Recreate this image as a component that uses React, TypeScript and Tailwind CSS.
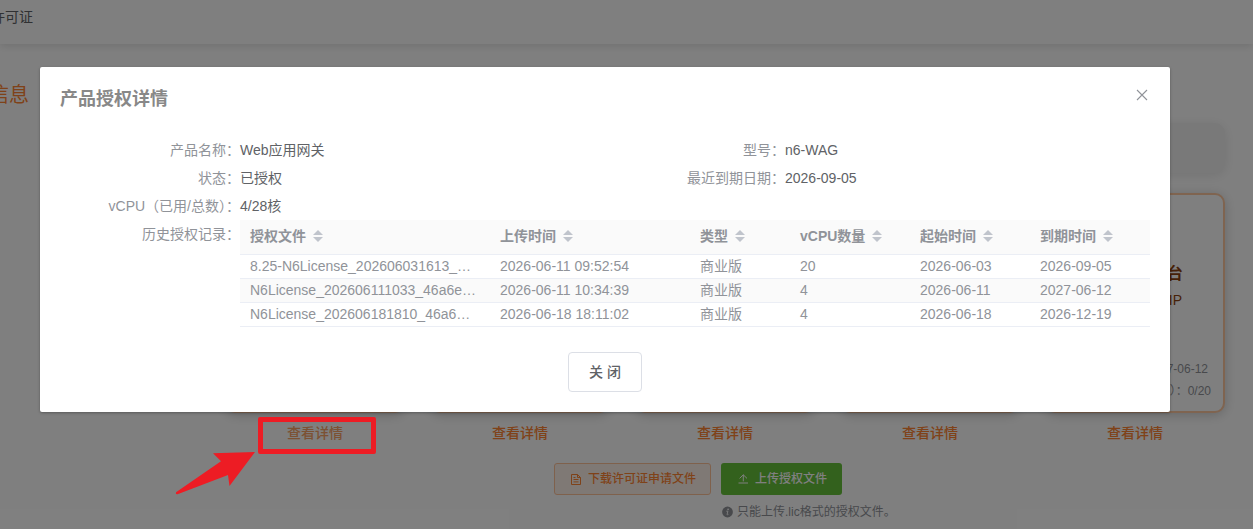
import React from "react";

const historyRows = [
  ["8.25-N6License_202606031613_…", "2026-06-11 09:52:54", "商业版", "20", "2026-06-03", "2026-09-05"],
  ["N6License_202606111033_46a6e…", "2026-06-11 10:34:39", "商业版", "4", "2026-06-11", "2027-06-12"],
  ["N6License_202606181810_46a6…", "2026-06-18 18:11:02", "商业版", "4", "2026-06-18", "2026-12-19"],
];

const columns = ["授权文件", "上传时间", "类型", "vCPU数量", "起始时间", "到期时间"];

function SortCaret() {
  return (
    <svg className="ml-[7px] h-3 w-[10px] shrink-0" viewBox="0 0 10 12" fill="#c0c4cc">
      <path d="M0 5L5 0L10 5Z" />
      <path d="M0 7L5 12L10 7Z" />
    </svg>
  );
}

function DocumentIcon() {
  return (
    <svg className="h-3 w-3" viewBox="0 0 12 12" fill="none" stroke="currentColor" strokeWidth="1">
      <path d="M1.5 1.5H7.5L10.5 4.5V11.5H1.5ZM7.5 1.5V4.5H10.5M3.5 4.5H5.5M3.5 6.5H8.5M3.5 8.9H8.5" />
    </svg>
  );
}

function UploadIcon() {
  return (
    <svg className="h-3 w-3" viewBox="0 0 12 12" fill="none" stroke="currentColor" strokeWidth="1">
      <path d="M1.5 10H11M6.3 8.4V1.8M2.6 5.4L6.3 1.8L10 5.4" />
    </svg>
  );
}

function InfoIcon() {
  return (
    <svg className="h-3 w-3" viewBox="0 0 12 12">
      <circle cx="6.5" cy="6" r="5.4" fill="currentColor" />
      <circle cx="7.1" cy="3.3" r="0.85" fill="#fff" />
      <path d="M5.3 5.2H6.9L6.1 8.4Q6 9.2 7.4 8.4" fill="none" stroke="#fff" strokeWidth="0.9" />
    </svg>
  );
}

function Field({ label, children }: { label: string; children: React.ReactNode }) {
  return (
    <div className="flex h-7 leading-7">
      <div className="w-[180px] shrink-0 text-right whitespace-nowrap text-[#909399]">{label}</div>
      <div className="text-[#606266]">{children}</div>
    </div>
  );
}

function LicensePage() {
  return (
    <div className="h-full bg-white">
      <header className="flex h-11 items-center bg-white pb-[10px] text-sm text-[#606266] shadow-[0_2px_8px_rgba(0,0,0,0.12)]">
        <span className="-ml-[9px] whitespace-nowrap">许可证</span>
      </header>
      <div className="flex h-[79px] items-start pt-[37px]">
        <h2 className="-ml-[11px] text-xl leading-7 whitespace-nowrap text-[#ff8533]">信息</h2>
      </div>
      <div className="mr-7 ml-[60px] h-[50px] rounded-[10px] bg-[#f2f2f2] shadow-[0_2px_12px_rgba(0,0,0,0.1)]" />
      <div className="mt-5 ml-[225px] flex gap-[25px]">
        {[0, 1, 2, 3, 4].map((i) => (
          <div key={i} className="flex w-[180px] flex-col items-center">
            <div className="flex h-[220px] w-full flex-col rounded-[10px] border-2 border-[#ffc8a0] bg-white shadow-[0_2px_12px_rgba(0,0,0,0.2)]">
              {i === 4 && (
                <>
                  <div className="mt-[67px] mr-[40px] text-right text-base leading-6 font-bold text-[#8f4310]">台</div>
                  <div className="mt-[2px] mr-[41px] text-right text-sm leading-6 text-[#8f4310]">IP</div>
                  <div className="mt-[46px] mr-[15px] text-right text-xs leading-[22px] text-[#909399]">7-06-12</div>
                  <div className="mr-[12px] text-right text-xs leading-[22px] text-[#909399]">）：0/20</div>
                </>
              )}
            </div>
            <a className={i === 0 ? "mt-[10px] text-sm leading-5 font-medium text-[#f9a366]" : "mt-[10px] text-sm leading-5 font-medium text-[#ff8533]"}>
              查看详情
            </a>
          </div>
        ))}
      </div>
      <div className="mt-5 ml-[554px] flex gap-[10px] text-xs font-medium">
        <button className="flex h-8 w-[157px] items-center gap-[6px] rounded-[3px] border border-[#ffc299] bg-[#fff3eb] pl-[15px] text-[#ff8533]">
          <DocumentIcon />
          下载许可证申请文件
        </button>
        <div>
          <button className="flex h-8 w-[121px] items-center gap-[6px] rounded-[3px] bg-[#67c23a] pl-4 text-white">
            <UploadIcon />
            上传授权文件
          </button>
          <div className="mt-2 flex items-center gap-[4px] font-normal whitespace-nowrap text-[#909399]">
            <InfoIcon />
            <span className="leading-[18px]">只能上传.lic格式的授权文件。</span>
          </div>
        </div>
      </div>
    </div>
  );
}

function DetailDialog() {
  return (
    <section className="mt-[67px] mr-[83px] ml-[40px] h-[345px] rounded-[2px] bg-white px-5 text-sm shadow-[0_1px_3px_rgba(0,0,0,0.3)]">
      <div className="flex h-[69px] items-start justify-between">
        <h1 className="pt-5 text-lg leading-6 font-bold text-[#888888]">产品授权详情</h1>
        <svg className="mt-[22px] mr-[2px] h-3 w-3" viewBox="0 0 12 12" fill="none" stroke="#909399" strokeWidth="1.1">
          <path d="M1 1L11 11M11 1L1 11" />
        </svg>
      </div>
      <div className="grid grid-cols-[545px_545px]">
        <Field label="产品名称：">Web应用网关</Field>
        <Field label="型号：">n6-WAG</Field>
        <Field label="状态：">已授权</Field>
        <Field label="最近到期日期：">2026-09-05</Field>
        <Field label="vCPU（已用/总数）：">4/28核</Field>
      </div>
      <div className="flex">
        <div className="w-[180px] text-right leading-7 text-[#909399]">历史授权记录：</div>
        <div className="w-[910px] text-[#909399]">
          <div className="grid h-[35px] grid-cols-[250px_200px_100px_120px_120px_120px] border-b border-[#ebeef5] bg-[#fafafa]">
            {columns.map((name) => (
              <div key={name} className="flex items-center pb-[2px] pl-[10px] font-bold">
                {name}
                <SortCaret />
              </div>
            ))}
          </div>
          {historyRows.map((row, i) => (
            <div
              key={row[0]}
              className={
                i === 1
                  ? "grid h-6 grid-cols-[250px_200px_100px_120px_120px_120px] border-b border-[#ebeef5] bg-[#fafafa]"
                  : "grid h-6 grid-cols-[250px_200px_100px_120px_120px_120px] border-b border-[#ebeef5]"
              }
            >
              {row.map((cell, j) => (
                <div key={j} className="pl-[10px] leading-[23px] whitespace-nowrap">
                  {cell}
                </div>
              ))}
            </div>
          ))}
        </div>
      </div>
      <div className="flex justify-center pt-[25px]">
        <button className="h-10 w-[74px] rounded border border-[#dcdfe6] font-medium text-[#606266]">关 闭</button>
      </div>
    </section>
  );
}

export default function App() {
  return (
    <div className="relative h-[529px] w-[1253px] overflow-hidden font-['Liberation_Sans','Noto_Sans_CJK_SC',sans-serif]" lang="zh-CN">
      <LicensePage />
      <div className="absolute inset-0 flex flex-col bg-black/50">
        <DetailDialog />
      </div>
      <div className="absolute top-[417px] left-[258px] h-[37px] w-[118px] rounded-[2px] border-[5px] border-[#ed1c24]" />
      <svg className="absolute top-[450px] left-[174px] h-[46px] w-[84px]" viewBox="174 450 84 46" fill="#ed1c24">
        <path d="M255 452L213 453.3L221 461.3L176 492.3Q175.2 494.6 177.5 494.2L228 475L229.5 486Z" />
      </svg>
    </div>
  );
}
